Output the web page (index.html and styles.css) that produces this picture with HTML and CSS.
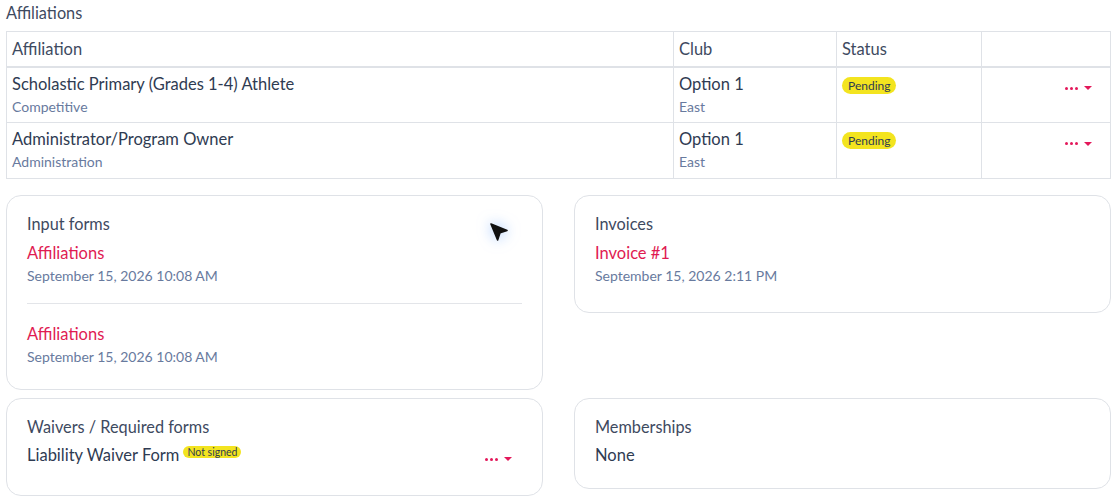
FILE: index.html
```html
<!DOCTYPE html>
<html lang="en">
<head>
<meta charset="utf-8">
<title>Affiliations</title>
<link rel="stylesheet" href="styles.css">
</head>
<body>
<div class="page">
  <h2 class="section-title">Affiliations</h2>
  <table class="aff-table">
    <thead>
      <tr>
        <th class="col-aff">Affiliation</th>
        <th class="col-club">Club</th>
        <th class="col-status">Status</th>
        <th class="col-actions"></th>
      </tr>
    </thead>
    <tbody>
      <tr>
        <td>
          <div class="main">Scholastic Primary (Grades 1-4) Athlete</div>
          <div class="sub">Competitive</div>
        </td>
        <td>
          <div class="main">Option 1</div>
          <div class="sub">East</div>
        </td>
        <td><span class="badge">Pending</span></td>
        <td class="actions-cell">
          <span class="menu-toggle"><span class="dots"><i></i><i></i><i></i></span><span class="caret"></span></span>
        </td>
      </tr>
      <tr>
        <td>
          <div class="main">Administrator/Program Owner</div>
          <div class="sub">Administration</div>
        </td>
        <td>
          <div class="main">Option 1</div>
          <div class="sub">East</div>
        </td>
        <td><span class="badge">Pending</span></td>
        <td class="actions-cell">
          <span class="menu-toggle"><span class="dots"><i></i><i></i><i></i></span><span class="caret"></span></span>
        </td>
      </tr>
    </tbody>
  </table>

  <div class="cards">
    <section class="card card-forms">
      <h3 class="card-title">Input forms</h3>
      <div class="entry">
        <a class="entry-link" href="#">Affiliations</a>
        <div class="entry-date">September 15, 2026 10:08 AM</div>
      </div>
      <div class="entry">
        <a class="entry-link" href="#">Affiliations</a>
        <div class="entry-date">September 15, 2026 10:08 AM</div>
      </div>
      <svg class="pointer" width="22" height="22" viewBox="0 0 22 22" aria-hidden="true">
        <path d="M3 3 L19 9.5 L12 11.8 L9.6 19 Z" fill="#111" stroke="#111" stroke-width="1.6" stroke-linejoin="round"/>
      </svg>
    </section>

    <section class="card card-invoices">
      <h3 class="card-title">Invoices</h3>
      <div class="entry">
        <a class="entry-link" href="#">Invoice #1</a>
        <div class="entry-date">September 15, 2026 2:11 PM</div>
      </div>
    </section>

    <section class="card card-waivers">
      <h3 class="card-title">Waivers / Required forms</h3>
      <div class="waiver-row">
        <span class="waiver-name">Liability Waiver Form</span>
        <span class="badge badge-small">Not signed</span>
        <span class="menu-toggle waiver-menu"><span class="dots"><i></i><i></i><i></i></span><span class="caret"></span></span>
      </div>
    </section>

    <section class="card card-members">
      <h3 class="card-title">Memberships</h3>
      <div class="plain">None</div>
    </section>
  </div>
</div>
</body>
</html>
```

FILE: styles.css
```css
* { box-sizing: border-box; }

html, body {
  margin: 0;
  padding: 0;
  background: #fff;
}

body {
  font-family: "Lato", "Noto Sans", sans-serif;
  color: #2f3b52;
}

.page {
  padding: 2px 6px 0 6px;
}

.section-title {
  margin: 0 0 7px 0;
  font-size: 16.3px;
  font-weight: 400;
  line-height: 22px;
  color: #3e4a5f;
}

/* affiliations table */
.aff-table {
  width: 100%;
  border-collapse: collapse;
  font-size: 16.5px;
}

.aff-table th,
.aff-table td {
  border: 1px solid #dfe2e7;
  text-align: left;
  vertical-align: top;
  font-weight: 400;
}

.aff-table th {
  height: 35px;
  padding: 7px 5px 4px;
  color: #3e4a5f;
  border-bottom: 2px solid #dfe2e7;
  line-height: 20px;
}

.aff-table td {
  height: 56px;
  padding: 6px 5px 4px 5px;
}

.col-aff { width: 667px; }
.col-club { width: 163px; }
.col-status { width: 145px; }

.main {
  line-height: 20px;
  color: #2f3b52;
}

.sub {
  margin-top: 5px;
  font-size: 14px;
  line-height: 16px;
  color: #687a9e;
}

.badge {
  display: inline-block;
  margin-top: 2px;
  padding: 1px 6px;
  border-radius: 9px;
  background: #f3e41f;
  color: #2f3b52;
  font-size: 12px;
  line-height: 15px;
}

.badge-small {
  margin: 1px 0 0 4px;
  padding: 0 4px;
  font-size: 10.5px;
  line-height: 12px;
  border-radius: 7px;
}

.aff-table .actions-cell {
  text-align: right;
}

.menu-toggle {
  display: inline-flex;
  align-items: center;
  gap: 6px;
  margin-top: 11px;
  margin-right: 13px;
}

.dots {
  display: inline-flex;
  gap: 2px;
}

.dots i {
  display: block;
  width: 3px;
  height: 3px;
  border-radius: 50%;
  background: #e3185a;
}

.caret {
  display: block;
  width: 0;
  height: 0;
  border-left: 4px solid transparent;
  border-right: 4px solid transparent;
  border-top: 4px solid #e3185a;
}

/* cards */
.cards {
  display: grid;
  grid-template-columns: 1fr 1fr;
  column-gap: 31px;
  row-gap: 8px;
  align-items: start;
  margin-top: 16px;
}

.card {
  position: relative;
  border: 1px solid #dfe2e7;
  border-radius: 15px;
  padding: 18px 20px 0 20px;
}

.card-title {
  margin: 0 0 9px 0;
  font-size: 16.3px;
  font-weight: 400;
  line-height: 20px;
  color: #3e4a5f;
}

.entry {
  padding-bottom: 19px;
}

.entry + .entry {
  border-top: 1px solid #e3e5e9;
  padding-top: 20px;
}

.entry-link {
  display: block;
  font-size: 16.5px;
  line-height: 20px;
  color: #e01b52;
  text-decoration: none;
}

.entry-date {
  margin-top: 5px;
  font-size: 14px;
  line-height: 16px;
  color: #687a9e;
}

.card-forms .entry:last-of-type { padding-bottom: 24px; }
.card-invoices .entry { padding-bottom: 28px; }

.card-waivers .card-title,
.card-members .card-title { margin-bottom: 8px; }

.waiver-row {
  display: flex;
  align-items: flex-start;
  padding-bottom: 30px;
}

.waiver-name {
  font-size: 16.5px;
  line-height: 20px;
  color: #2f3b52;
}

.waiver-menu {
  margin-left: auto;
  margin-top: 12px;
  margin-right: 10px;
}

.plain {
  font-size: 16.5px;
  line-height: 20px;
  color: #2f3b52;
  padding-bottom: 23px;
}

/* mouse pointer sitting over the forms card */
.pointer {
  position: absolute;
  left: 481px;
  top: 25px;
  filter: drop-shadow(0 0 7px rgba(80, 150, 255, 0.6));
}
```
